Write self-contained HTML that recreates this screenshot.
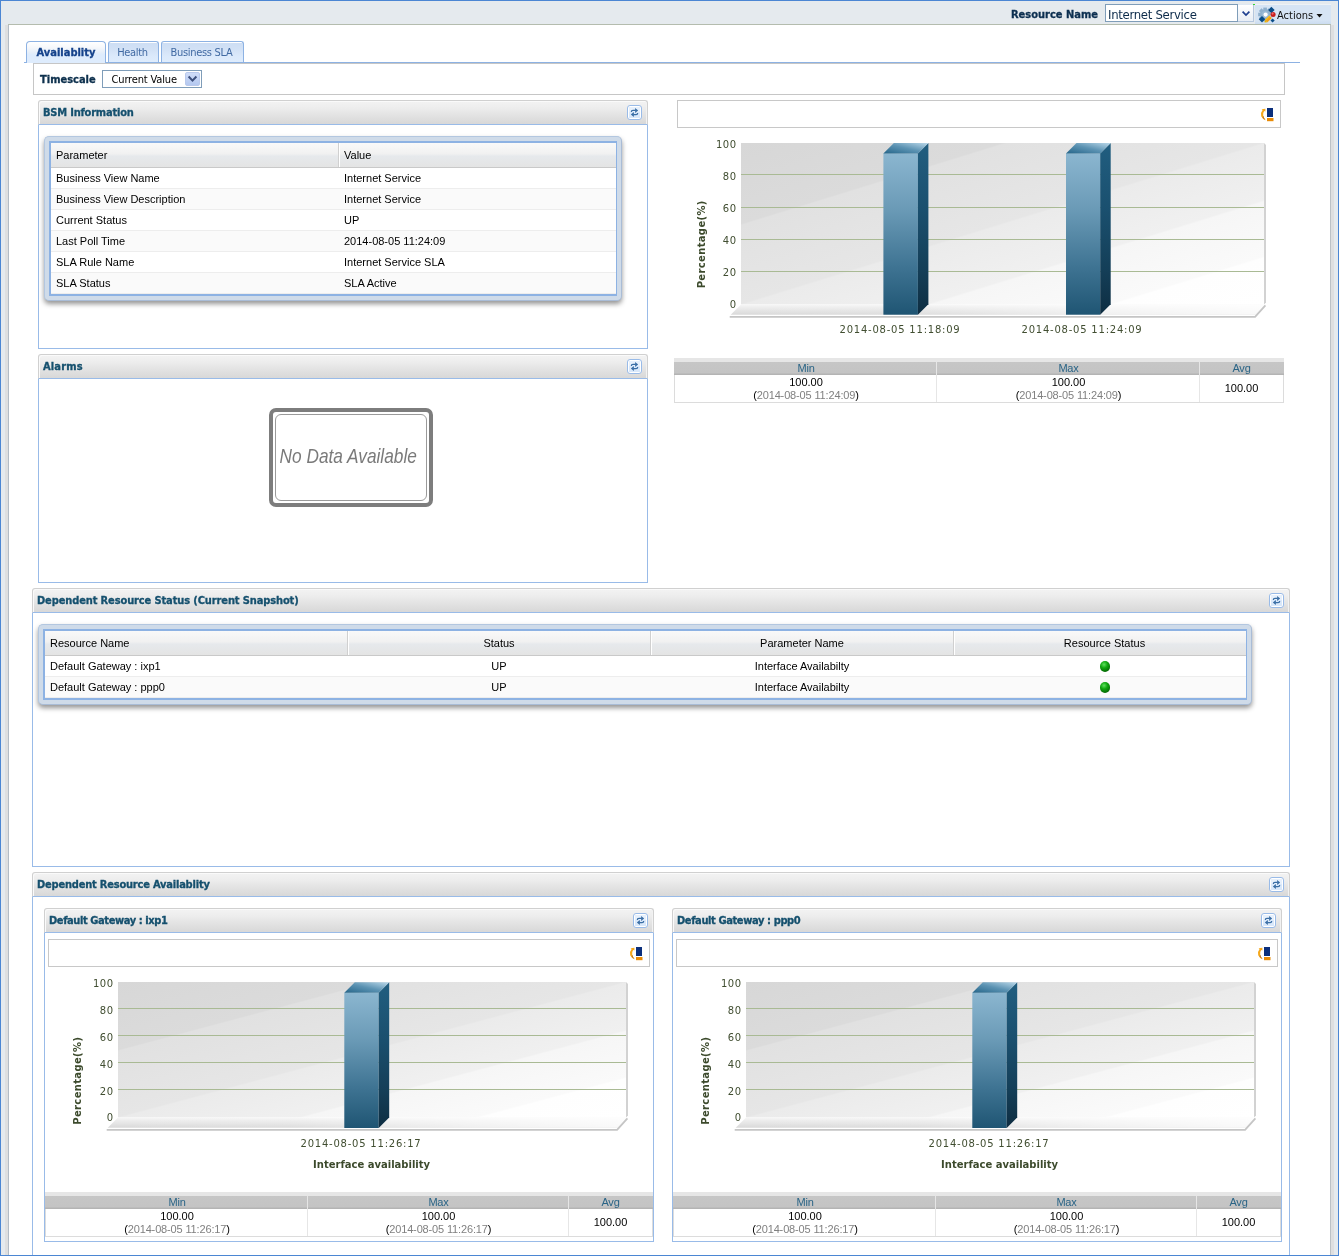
<!DOCTYPE html>
<html lang="en"><head><meta charset="utf-8"><title>Business Service - Availablity</title>
<style>
*{box-sizing:border-box}
html,body{margin:0;padding:0}
body{width:1339px;height:1256px;overflow:hidden;background:#e5eaee;font-family:"Liberation Sans",sans-serif;font-size:11px;color:#000;position:relative}
#root{position:absolute;left:0;top:0;width:1339px;height:1256px;will-change:transform}
.abs{position:absolute}
.t{position:absolute;white-space:nowrap;line-height:1}
.tah{font-family:"DejaVu Sans Condensed","DejaVu Sans","Liberation Sans",sans-serif;font-stretch:condensed}
.ver{font-family:"DejaVu Sans","Liberation Sans",sans-serif}
/* outer frame */
#frame{left:0;top:0;width:1339px;height:1256px;border:1px solid #4b86d3;z-index:10}
#content{left:9px;top:25px;width:1321px;height:1230px;background:#fff}
#cb-top{left:8px;top:24px;width:1323px;height:1px;background:#b4bcae}
#cb-left{left:8px;top:25px;width:1px;height:1230px;background:#b3bcc5}
#sh-left{left:5px;top:25px;width:3px;height:1230px;background:#dedfe0}
#sh-right{left:1330px;top:25px;width:4px;height:1230px;background:linear-gradient(90deg,#bcc1c6 0,#bcc1c6 1px,#dedfe0 1px,#dedfe0 4px)}
/* panel headers */
.ph{position:absolute;height:25px;border:1px solid #d0d0d0;border-bottom:1px solid #99bbe8;border-radius:3px 3px 0 0;background:linear-gradient(180deg,#f3f3f3 0%,#ededed 30%,#e2e2e2 65%,#d8d8d8 100%);box-shadow:inset 1px 1px 0 #fafafa,inset -1px 0 0 #f2f2f2}
.ph .ttl{position:absolute;left:4px;top:6px;-webkit-text-stroke:0.3px currentColor;font-weight:bold;font-size:11px;line-height:11px;color:#15506e;white-space:nowrap;letter-spacing:-0.2px}
.pb{position:absolute;border:1px solid #99bbe8;border-top:none;background:#fff}
.rf{position:absolute;width:15px;height:15px;border:1px solid #99bbe8;border-radius:3px;background:#fff;overflow:hidden}
.rf svg{position:absolute;left:0;top:0}
/* grids */
.gf{position:absolute;border:1px solid #a9bcd6;border-top-color:#b3c7e0;border-left-color:#b3c7e0;border-radius:5px;background:#cfdbe9;box-shadow:0 3px 5px rgba(0,0,0,.42)}
.gi{position:absolute;left:4px;top:4px;right:4px;bottom:4px;border:1px solid #8db2e3;border-width:2px 1px 2px 2px;background:#fff;overflow:hidden}
.gh{position:absolute;left:0;top:0;right:0;height:25px;background:linear-gradient(180deg,#f9f9f9 0%,#f1f1f1 45%,#e6e9ec 55%,#e4e4e4 100%);border-bottom:1px solid #c9c9c9}
.gr{position:absolute;left:0;right:0;height:21px;border-bottom:1px solid #ededed;background:#fff}
.gr.alt{background:#fafafa}
.gc{position:absolute;top:0;height:100%;font-size:11px;line-height:11px;white-space:nowrap}
.gc span{position:absolute;top:5px}
.gh .gc span{top:7px}
.sep{position:absolute;top:0;width:1px;height:24px;background:#d0d0d0;box-shadow:1px 0 0 #fff}
/* stats table */
.st{position:absolute;height:45px;border:1px solid #dcdcdc;border-top:none;background:#fff}
.st .hd{position:absolute;left:-1px;right:-1px;top:0;height:17px;background:linear-gradient(180deg,#e6e6e6 0,#e6e6e6 4px,#c6c6c6 4px,#c4c4c4 15px,#b4b4b4 16px,#b4b4b4 17px)}
.st .c{position:absolute;top:0;height:100%;text-align:center}
.st .hl{position:absolute;left:0;right:0;top:5px;font-size:11px;line-height:11px;color:#2a6486;text-align:center;letter-spacing:-0.2px}
.st .v{position:absolute;left:0;right:0;font-size:11px;line-height:11px;text-align:center;color:#000}
.st .d{position:absolute;left:0;right:0;font-size:11px;line-height:11px;text-align:center;color:#808080;letter-spacing:-0.15px}
.st .d b{font-weight:normal;color:#000}
.st .vs{position:absolute;top:4px;bottom:0;width:1px;background:#e6e6e6}
.dot{position:absolute;left:50%;top:0;margin-left:-5px;width:10.5px;height:10.5px;border-radius:50%;background:radial-gradient(circle at 40% 32%,#5fe05f 0%,#12a812 35%,#067306 70%,#034d03 100%)}
.tb{position:absolute;height:28px;border:1px solid #c8c8c8;background:#fff}
</style></head>
<body>
<div id="root">
<div class="abs" id="frame"></div>
<div class="abs" id="content"></div>
<div class="abs" id="cb-top"></div><div class="abs" id="cb-left"></div>
<div class="abs" id="sh-left"></div><div class="abs" id="sh-right"></div>
<div class="t tah" style="left:1011px;top:9px;font-weight:bold;-webkit-text-stroke:0.3px #0c2f50;font-size:11px;line-height:11px;color:#0c2f50;letter-spacing:0px" id="rn">Resource Name</div>
<div class="abs" style="left:1105px;top:4px;width:133px;height:18px;border:1px solid #7f9db9;background:#fff"></div>
<div class="t tah" style="left:1108px;top:8px;font-size:13px;line-height:13px;color:#0d2b4a;letter-spacing:-0.3px" id="isv">Internet Service</div>
<div class="abs" style="left:1238px;top:4px;width:16px;height:18px;border:1px solid #b5c7de;border-left:none;border-top-color:#dfe8f2;background:linear-gradient(180deg,#ffffff,#e9eef5)"></div>
<svg class="abs" style="left:1240px;top:9px" width="12" height="9" viewBox="0 0 12 9"><path d="M2.6 2.6 L6 6 L9.4 2.6" fill="none" stroke="#1f3f8f" stroke-width="1.7"/></svg>
<div class="abs" style="left:1255px;top:5px;width:76px;height:19px;background:linear-gradient(180deg,#d6e4f4 0%,#d6e4f4 80%,#cbdcf0 100%)"></div>
<div class="abs" style="left:1255px;top:4px;width:76px;height:1px;background:#eef2f6"></div>
<div class="abs" style="left:1253px;top:4px;width:2px;height:1px;background:#35d835"></div>
<svg class="abs" style="left:1257px;top:6px" width="20" height="18" viewBox="0 0 20 18">
<g fill="#8fb0cd"><circle cx="8.1" cy="8.5" r="4.9"/><rect x="6.3" y="1.6" width="3.6" height="13.8"/><rect x="1.2" y="6.7" width="13.8" height="3.6"/><rect x="6.3" y="1.6" width="3.6" height="13.8" transform="rotate(45 8.1 8.5)"/><rect x="6.3" y="1.6" width="3.6" height="13.8" transform="rotate(-45 8.1 8.5)"/></g>
<circle cx="8.1" cy="8.5" r="3.6" fill="#a3c0d9" opacity=".55"/>
<circle cx="8.6" cy="8.6" r="2.1" fill="#ffffff"/>
<g fill="#0a4d88"><rect x="12.1" y="1.7" width="4.6" height="4.6" transform="rotate(45 14.4 4)"/><rect x="2.7" y="11" width="4.6" height="4.6" transform="rotate(45 5 13.3)"/><rect x="14.1" y="13" width="3" height="3" transform="rotate(45 15.6 14.5)"/></g>
<path d="M7.5 16.6 L8.07 13.71 L10.41 16.17 Z" fill="#e9b500"/>
<path d="M8.07 13.71 L12.57 9.44 L14.91 11.9 L10.41 16.17 Z" fill="#f3a017"/>
<path d="M8.07 13.71 L12.57 9.44 L13.4 10.3 L8.9 14.6 Z" fill="#f8c21c"/>
<path d="M12.57 9.44 L13.43 8.6 L15.78 11.07 L14.91 11.9 Z" fill="#c9cdd1"/>
<circle cx="16.1" cy="8.4" r="2.5" fill="#c81e1e"/><circle cx="15.6" cy="7.6" r="1.1" fill="#ef6a6a"/>
</svg>
<div class="t tah" style="left:1277px;top:10px;font-size:11px;line-height:11px;color:#111;letter-spacing:0px" id="act">Actions</div>
<svg class="abs" style="left:1316px;top:14px" width="7" height="4" viewBox="0 0 7 4"><path d="M0.5 0 L6.5 0 L3.5 3.4 Z" fill="#111"/></svg>
<div class="abs" style="left:24px;top:62px;width:1276px;height:1px;background:#8db2e3"></div>
<div class="abs" style="left:26px;top:41px;width:80px;height:22px;border:1px solid #8db2e3;border-bottom:none;border-radius:4px 4px 0 0;background:linear-gradient(180deg,#ffffff 0%,#f6f8fb 25%,#e6effa 50%,#deecfd 60%,#deecfd 100%)"></div><div class="abs" style="left:24px;top:62px;width:3px;height:1px;background:#8db2e3"></div><div class="t tah" id="tab1" style="left:26px;width:80px;text-align:center;top:47px;font-weight:bold;-webkit-text-stroke:0.3px #15428b;font-size:11px;line-height:11px;color:#15428b;letter-spacing:0px">Availablity</div>
<div class="abs" style="left:108px;top:41px;width:51px;height:21px;border:1px solid #8db2e3;border-bottom:none;border-radius:3px 3px 0 0;background:linear-gradient(180deg,#ffffff 0,#ffffff 1px,#cddef4 1px,#d3e2f6 40%,#dbe9fb 70%,#deecfd 100%)"></div><div class="t tah" id="tab2" style="left:107px;width:51px;text-align:center;top:47px;font-size:11px;line-height:11px;color:#416aa3;letter-spacing:-0.3px">Health</div>
<div class="abs" style="left:161px;top:41px;width:83px;height:21px;border:1px solid #8db2e3;border-bottom:none;border-radius:3px 3px 0 0;background:linear-gradient(180deg,#ffffff 0,#ffffff 1px,#cddef4 1px,#d3e2f6 40%,#dbe9fb 70%,#deecfd 100%)"></div><div class="t tah" id="tab3" style="left:160px;width:83px;text-align:center;top:47px;font-size:11px;line-height:11px;color:#416aa3;letter-spacing:-0.3px">Business SLA</div>
<div class="abs" style="left:33px;top:63px;width:1252px;height:32px;border:1px solid #c6c6c6;background:#fff"></div>
<div class="t tah" id="tsl" style="left:40px;top:74px;font-weight:bold;-webkit-text-stroke:0.3px #0d304d;font-size:11px;line-height:11px;color:#0d304d;letter-spacing:0px">Timescale</div>
<div class="abs" style="left:102px;top:70px;width:100px;height:18px;border:1px solid #7f9db9;background:#fff"></div>
<div class="t tah" id="tsv" style="left:111.5px;top:74px;font-size:11px;line-height:11px;color:#000;letter-spacing:-0.15px">Current Value</div>
<div class="abs" style="left:185px;top:72px;width:15px;height:14px;border-radius:2px;background:linear-gradient(180deg,#cfdcf8,#b4c8f0);border:1px solid #b9c9ec"></div>
<svg class="abs" style="left:187px;top:75px" width="11" height="8" viewBox="0 0 11 8"><path d="M1.6 1.5 L5.5 5.6 L9.4 1.5" fill="none" stroke="#3c4f7c" stroke-width="2"/></svg>
<div class="ph" style="left:38px;top:100px;width:610px"><div class="ttl tah" id="p1" style="letter-spacing:-0.2px">BSM Information</div></div><div class="pb" style="left:38px;top:125px;width:610px;height:224px"></div><div class="rf" style="left:627px;top:105px"><svg width="13" height="13" viewBox="0 0 13 13"><rect x="1" y="1" width="11" height="11" fill="#e6f0fc"/><rect x="1" y="6" width="11" height="6" fill="#d9e8fa"/><g fill="none" stroke="#3a6ea5" stroke-width="1.25"><path d="M3.3 6 Q3.3 4.4 5 4.4 L7.6 4.4"/><path d="M9.7 7 Q9.7 8.6 8 8.6 L5.4 8.6"/></g><path d="M7.1 1.9 L10.2 4.4 L7.1 6.9 Z" fill="#3a6ea5"/><path d="M5.9 6.1 L2.8 8.6 L5.9 11.1 Z" fill="#3a6ea5"/></svg></div>
<div class="gf" style="left:44px;top:136px;width:578px;height:165px"><div class="gi"><div class="gh"><div class="gc" style="left:0px;width:287px"><span style="left:5px">Parameter</span></div><div class="gc" style="left:288px;width:278px"><span style="left:5px">Value</span></div><div class="sep" style="left:287px"></div></div><div class="gr" style="top:25px"><div class="gc" style="left:0px;width:287px"><span style="left:5px">Business View Name</span></div><div class="gc" style="left:288px;width:278px"><span style="left:5px">Internet Service</span></div></div><div class="gr alt" style="top:46px"><div class="gc" style="left:0px;width:287px"><span style="left:5px">Business View Description</span></div><div class="gc" style="left:288px;width:278px"><span style="left:5px">Internet Service</span></div></div><div class="gr" style="top:67px"><div class="gc" style="left:0px;width:287px"><span style="left:5px">Current Status</span></div><div class="gc" style="left:288px;width:278px"><span style="left:5px">UP</span></div></div><div class="gr alt" style="top:88px"><div class="gc" style="left:0px;width:287px"><span style="left:5px">Last Poll Time</span></div><div class="gc" style="left:288px;width:278px"><span style="left:5px">2014-08-05 11:24:09</span></div></div><div class="gr" style="top:109px"><div class="gc" style="left:0px;width:287px"><span style="left:5px">SLA Rule Name</span></div><div class="gc" style="left:288px;width:278px"><span style="left:5px">Internet Service SLA</span></div></div><div class="gr alt" style="top:130px"><div class="gc" style="left:0px;width:287px"><span style="left:5px">SLA Status</span></div><div class="gc" style="left:288px;width:278px"><span style="left:5px">SLA Active</span></div></div></div></div>
<div class="ph" style="left:38px;top:354px;width:610px"><div class="ttl tah" id="p2" style="letter-spacing:0.15px">Alarms</div></div><div class="pb" style="left:38px;top:379px;width:610px;height:204px"></div><div class="rf" style="left:627px;top:359px"><svg width="13" height="13" viewBox="0 0 13 13"><rect x="1" y="1" width="11" height="11" fill="#e6f0fc"/><rect x="1" y="6" width="11" height="6" fill="#d9e8fa"/><g fill="none" stroke="#3a6ea5" stroke-width="1.25"><path d="M3.3 6 Q3.3 4.4 5 4.4 L7.6 4.4"/><path d="M9.7 7 Q9.7 8.6 8 8.6 L5.4 8.6"/></g><path d="M7.1 1.9 L10.2 4.4 L7.1 6.9 Z" fill="#3a6ea5"/><path d="M5.9 6.1 L2.8 8.6 L5.9 11.1 Z" fill="#3a6ea5"/></svg></div>
<div class="abs" style="left:269px;top:408px;width:164px;height:99px;border:4px solid #7d7d7d;border-radius:7px;background:#fff"></div>
<div class="abs" style="left:275px;top:414px;width:152px;height:87px;border:1px solid #9a9a9a;border-radius:6px;background:#fff"></div>
<div class="t" id="nda" style="left:265.4px;width:164px;text-align:center;top:445px;font-style:italic;font-size:21px;line-height:22px;color:#7a7a7a;transform:scaleX(.822);transform-origin:50% 50%">No Data Available</div>
<div class="ph" style="left:32px;top:588px;width:1258px"><div class="ttl tah" id="p3" style="letter-spacing:-0.12px">Dependent Resource Status (Current Snapshot)</div></div><div class="pb" style="left:32px;top:613px;width:1258px;height:254px"></div><div class="rf" style="left:1269px;top:593px"><svg width="13" height="13" viewBox="0 0 13 13"><rect x="1" y="1" width="11" height="11" fill="#e6f0fc"/><rect x="1" y="6" width="11" height="6" fill="#d9e8fa"/><g fill="none" stroke="#3a6ea5" stroke-width="1.25"><path d="M3.3 6 Q3.3 4.4 5 4.4 L7.6 4.4"/><path d="M9.7 7 Q9.7 8.6 8 8.6 L5.4 8.6"/></g><path d="M7.1 1.9 L10.2 4.4 L7.1 6.9 Z" fill="#3a6ea5"/><path d="M5.9 6.1 L2.8 8.6 L5.9 11.1 Z" fill="#3a6ea5"/></svg></div>
<div class="gf" style="left:38px;top:624px;width:1214px;height:81px"><div class="gi"><div class="gh"><div class="gc" style="left:0px;width:302px"><span style="left:5px">Resource Name</span></div><div class="gc" style="left:303px;width:302px"><span style="left:0;width:302px;text-align:center">Status</span></div><div class="sep" style="left:302px"></div><div class="gc" style="left:606px;width:302px"><span style="left:0;width:302px;text-align:center">Parameter Name</span></div><div class="sep" style="left:605px"></div><div class="gc" style="left:909px;width:301px"><span style="left:0;width:301px;text-align:center">Resource Status</span></div><div class="sep" style="left:908px"></div></div><div class="gr" style="top:25px"><div class="gc" style="left:0px;width:302px"><span style="left:5px">Default Gateway : ixp1</span></div><div class="gc" style="left:303px;width:302px"><span style="left:0;width:302px;text-align:center">UP</span></div><div class="gc" style="left:606px;width:302px"><span style="left:0;width:302px;text-align:center">Interface Availabilty</span></div><div class="gc" style="left:909px;width:301px"><span style="left:0;width:301px;text-align:center"><i class="dot"></i></span></div></div><div class="gr alt" style="top:46px"><div class="gc" style="left:0px;width:302px"><span style="left:5px">Default Gateway : ppp0</span></div><div class="gc" style="left:303px;width:302px"><span style="left:0;width:302px;text-align:center">UP</span></div><div class="gc" style="left:606px;width:302px"><span style="left:0;width:302px;text-align:center">Interface Availabilty</span></div><div class="gc" style="left:909px;width:301px"><span style="left:0;width:301px;text-align:center"><i class="dot"></i></span></div></div></div></div>
<div class="ph" style="left:32px;top:872px;width:1258px"><div class="ttl tah" id="p4" style="letter-spacing:-0.2px">Dependent Resource Availablity</div></div><div class="pb" style="left:32px;top:897px;width:1258px;height:400px"></div><div class="rf" style="left:1269px;top:877px"><svg width="13" height="13" viewBox="0 0 13 13"><rect x="1" y="1" width="11" height="11" fill="#e6f0fc"/><rect x="1" y="6" width="11" height="6" fill="#d9e8fa"/><g fill="none" stroke="#3a6ea5" stroke-width="1.25"><path d="M3.3 6 Q3.3 4.4 5 4.4 L7.6 4.4"/><path d="M9.7 7 Q9.7 8.6 8 8.6 L5.4 8.6"/></g><path d="M7.1 1.9 L10.2 4.4 L7.1 6.9 Z" fill="#3a6ea5"/><path d="M5.9 6.1 L2.8 8.6 L5.9 11.1 Z" fill="#3a6ea5"/></svg></div>
<div class="ph" style="left:44px;top:908px;width:610px"><div class="ttl tah" id="p5" style="letter-spacing:-0.4px">Default Gateway : ixp1</div></div><div class="pb" style="left:44px;top:933px;width:610px;height:309px"></div><div class="rf" style="left:633px;top:913px"><svg width="13" height="13" viewBox="0 0 13 13"><rect x="1" y="1" width="11" height="11" fill="#e6f0fc"/><rect x="1" y="6" width="11" height="6" fill="#d9e8fa"/><g fill="none" stroke="#3a6ea5" stroke-width="1.25"><path d="M3.3 6 Q3.3 4.4 5 4.4 L7.6 4.4"/><path d="M9.7 7 Q9.7 8.6 8 8.6 L5.4 8.6"/></g><path d="M7.1 1.9 L10.2 4.4 L7.1 6.9 Z" fill="#3a6ea5"/><path d="M5.9 6.1 L2.8 8.6 L5.9 11.1 Z" fill="#3a6ea5"/></svg></div>
<div class="ph" style="left:672px;top:908px;width:610px"><div class="ttl tah" id="p6" style="letter-spacing:-0.38px">Default Gateway : ppp0</div></div><div class="pb" style="left:672px;top:933px;width:610px;height:309px"></div><div class="rf" style="left:1261px;top:913px"><svg width="13" height="13" viewBox="0 0 13 13"><rect x="1" y="1" width="11" height="11" fill="#e6f0fc"/><rect x="1" y="6" width="11" height="6" fill="#d9e8fa"/><g fill="none" stroke="#3a6ea5" stroke-width="1.25"><path d="M3.3 6 Q3.3 4.4 5 4.4 L7.6 4.4"/><path d="M9.7 7 Q9.7 8.6 8 8.6 L5.4 8.6"/></g><path d="M7.1 1.9 L10.2 4.4 L7.1 6.9 Z" fill="#3a6ea5"/><path d="M5.9 6.1 L2.8 8.6 L5.9 11.1 Z" fill="#3a6ea5"/></svg></div>
<div class="tb" style="left:677px;top:100px;width:604px"></div><svg class="abs" style="left:1260px;top:108px" width="16" height="14" viewBox="0 0 16 14">
<rect x="7" y="0" width="6" height="9" fill="#0b2f7c"/><rect x="7" y="10" width="6.5" height="3.2" fill="#e98b06"/>
<path d="M5.4 0.8 L5.4 3.6 L4.2 3 Q2.6 5.2 3.2 7.8 Q3.8 10 5.6 12.2 Q2.4 11 1.2 8.2 Q0.2 4.8 2.6 2 L1.6 1.2 Z" fill="#f5a81c"/>
<path d="M3.2 7.8 Q3.8 10 5.6 12.2 Q3.8 11.4 2.6 9.6 Z" fill="#b8732a"/>
</svg>
<svg class="abs" style="left:0;top:0;pointer-events:none" width="1339" height="1256" viewBox="0 0 1339 1256"><defs>
<linearGradient id="bw1" gradientUnits="userSpaceOnUse" x1="741" y1="143" x2="832.1" y2="437.9">
<stop offset="0" stop-color="#d7d7d7"/><stop offset="0.25" stop-color="#dbdbdb"/><stop offset="0.255" stop-color="#e1e1e1"/>
<stop offset="0.497" stop-color="#e6e6e6"/><stop offset="0.503" stop-color="#ebebeb"/>
<stop offset="0.676" stop-color="#f0f0f0"/><stop offset="0.682" stop-color="#f6f6f6"/>
<stop offset="0.85" stop-color="#fafafa"/><stop offset="0.856" stop-color="#fefefe"/><stop offset="1" stop-color="#ffffff"/>
</linearGradient>
<linearGradient id="fl1" x1="0" y1="0" x2="0" y2="1"><stop offset="0" stop-color="#f7f7f7"/><stop offset="0.25" stop-color="#eeeeee"/><stop offset="1" stop-color="#d9d9d9"/></linearGradient>
<linearGradient id="fw1" x1="0" y1="0" x2="1" y2="0"><stop offset="0" stop-color="#fff" stop-opacity="0"/><stop offset="0.35" stop-color="#fff" stop-opacity="0.1"/><stop offset="0.7" stop-color="#fff" stop-opacity="0.6"/><stop offset="1" stop-color="#fff" stop-opacity="0.85"/></linearGradient>
<linearGradient id="bf1" x1="0" y1="0" x2="0" y2="1"><stop offset="0" stop-color="#8bb6d0"/><stop offset="0.35" stop-color="#6a9ab6"/><stop offset="0.7" stop-color="#3f7493"/><stop offset="1" stop-color="#1f5573"/></linearGradient>
<linearGradient id="bs1" x1="0" y1="0" x2="0" y2="1"><stop offset="0" stop-color="#215e80"/><stop offset="0.4" stop-color="#1a4f6e"/><stop offset="0.75" stop-color="#143e57"/><stop offset="1" stop-color="#0e2d41"/></linearGradient>
<linearGradient id="bt1" x1="0" y1="1" x2="1" y2="0"><stop offset="0" stop-color="#256589"/><stop offset="0.5" stop-color="#5c93b3"/><stop offset="1" stop-color="#bcd9ea"/></linearGradient>
</defs><rect x="741" y="143" width="523" height="161.5" fill="url(#bw1)"/><path d="M1264 143 L1266 145 L1266 302.5 L1264 304.5 Z" fill="#d2d2d2"/><rect x="741" y="174" width="523" height="1" fill="#a9ba94"/><rect x="741" y="207" width="523" height="1" fill="#a9ba94"/><rect x="741" y="239" width="523" height="1" fill="#a9ba94"/><rect x="741" y="271" width="523" height="1" fill="#a9ba94"/><path d="M741 304.5 L1266 304.5 L1255.7 314.8 L730.7 314.8 Z" fill="url(#fl1)"/><path d="M741 304.5 L1266 304.5 L1255.7 314.8 L730.7 314.8 Z" fill="url(#fw1)"/><path d="M729.7 316.90000000000003 L1255.1000000000001 316.90000000000003 L1265.4 305.3" fill="none" stroke="#c5c5c5" stroke-width="1.8" stroke-linejoin="miter"/><rect x="883.4" y="153.4" width="34.5" height="161.29999999999998" fill="url(#bf1)"/><path d="M917.9 153.4 L928.4 142.9 L928.4 304.2 L917.9 314.7 Z" fill="url(#bs1)"/><path d="M883.4 153.4 L893.9 142.9 L928.4 142.9 L917.9 153.4 Z" fill="url(#bt1)"/><rect x="1066" y="153.4" width="34.200000000000045" height="161.29999999999998" fill="url(#bf1)"/><path d="M1100.2 153.4 L1110.7 142.9 L1110.7 304.2 L1100.2 314.7 Z" fill="url(#bs1)"/><path d="M1066 153.4 L1076.5 142.9 L1110.7 142.9 L1100.2 153.4 Z" fill="url(#bt1)"/><text x="736.5" y="147.9" text-anchor="end" font-family="DejaVu Sans, Liberation Sans, sans-serif" font-size="10" letter-spacing="0.5" fill="#414e31">100</text><text x="736.5" y="179.9" text-anchor="end" font-family="DejaVu Sans, Liberation Sans, sans-serif" font-size="10" letter-spacing="0.5" fill="#414e31">80</text><text x="736.5" y="212.0" text-anchor="end" font-family="DejaVu Sans, Liberation Sans, sans-serif" font-size="10" letter-spacing="0.5" fill="#414e31">60</text><text x="736.5" y="244.4" text-anchor="end" font-family="DejaVu Sans, Liberation Sans, sans-serif" font-size="10" letter-spacing="0.5" fill="#414e31">40</text><text x="736.5" y="276.4" text-anchor="end" font-family="DejaVu Sans, Liberation Sans, sans-serif" font-size="10" letter-spacing="0.5" fill="#414e31">20</text><text x="736.5" y="308.4" text-anchor="end" font-family="DejaVu Sans, Liberation Sans, sans-serif" font-size="10" letter-spacing="0.5" fill="#414e31">0</text><text x="900" y="333" text-anchor="middle" font-family="DejaVu Sans, Liberation Sans, sans-serif" font-size="10" letter-spacing="0.78" fill="#414e31">2014-08-05 11:18:09</text><text x="1082" y="333" text-anchor="middle" font-family="DejaVu Sans, Liberation Sans, sans-serif" font-size="10" letter-spacing="0.78" fill="#414e31">2014-08-05 11:24:09</text><text transform="translate(704.7 244.3) rotate(-90)" text-anchor="middle" font-family="DejaVu Sans, Liberation Sans, sans-serif" font-weight="bold" font-size="10" letter-spacing="0.35" fill="#3c4a2c">Percentage(%)</text></svg>
<div class="st" style="left:674px;top:358px;width:610px"><div class="hd"></div><div class="c" style="left:0px;width:262px"><div class="hl">Min</div><div class="v" style="top:19px">100.00</div><div class="d" style="top:32px"><b>(</b>2014-08-05 11:24:09<b>)</b></div></div><div class="c" style="left:262px;width:263px"><div class="hl">Max</div><div class="v" style="top:19px">100.00</div><div class="d" style="top:32px"><b>(</b>2014-08-05 11:24:09<b>)</b></div></div><div class="c" style="left:525px;width:83px"><div class="hl">Avg</div><div class="v" style="top:25px">100.00</div></div><div class="vs" style="left:261px"></div><div class="vs" style="left:524px"></div></div>
<div class="tb" style="left:48px;top:939px;width:602px"></div><svg class="abs" style="left:629px;top:947px" width="16" height="14" viewBox="0 0 16 14">
<rect x="7" y="0" width="6" height="9" fill="#0b2f7c"/><rect x="7" y="10" width="6.5" height="3.2" fill="#e98b06"/>
<path d="M5.4 0.8 L5.4 3.6 L4.2 3 Q2.6 5.2 3.2 7.8 Q3.8 10 5.6 12.2 Q2.4 11 1.2 8.2 Q0.2 4.8 2.6 2 L1.6 1.2 Z" fill="#f5a81c"/>
<path d="M3.2 7.8 Q3.8 10 5.6 12.2 Q3.8 11.4 2.6 9.6 Z" fill="#b8732a"/>
</svg>
<svg class="abs" style="left:0;top:0;pointer-events:none" width="1339" height="1256" viewBox="0 0 1339 1256"><defs>
<linearGradient id="bw2" gradientUnits="userSpaceOnUse" x1="118" y1="982" x2="185.5" y2="1235.0">
<stop offset="0" stop-color="#d7d7d7"/><stop offset="0.25" stop-color="#dbdbdb"/><stop offset="0.255" stop-color="#e1e1e1"/>
<stop offset="0.497" stop-color="#e6e6e6"/><stop offset="0.503" stop-color="#ebebeb"/>
<stop offset="0.676" stop-color="#f0f0f0"/><stop offset="0.682" stop-color="#f6f6f6"/>
<stop offset="0.85" stop-color="#fafafa"/><stop offset="0.856" stop-color="#fefefe"/><stop offset="1" stop-color="#ffffff"/>
</linearGradient>
<linearGradient id="fl2" x1="0" y1="0" x2="0" y2="1"><stop offset="0" stop-color="#f7f7f7"/><stop offset="0.25" stop-color="#eeeeee"/><stop offset="1" stop-color="#d9d9d9"/></linearGradient>
<linearGradient id="fw2" x1="0" y1="0" x2="1" y2="0"><stop offset="0" stop-color="#fff" stop-opacity="0"/><stop offset="0.35" stop-color="#fff" stop-opacity="0.1"/><stop offset="0.7" stop-color="#fff" stop-opacity="0.6"/><stop offset="1" stop-color="#fff" stop-opacity="0.85"/></linearGradient>
<linearGradient id="bf2" x1="0" y1="0" x2="0" y2="1"><stop offset="0" stop-color="#8bb6d0"/><stop offset="0.35" stop-color="#6a9ab6"/><stop offset="0.7" stop-color="#3f7493"/><stop offset="1" stop-color="#1f5573"/></linearGradient>
<linearGradient id="bs2" x1="0" y1="0" x2="0" y2="1"><stop offset="0" stop-color="#215e80"/><stop offset="0.4" stop-color="#1a4f6e"/><stop offset="0.75" stop-color="#143e57"/><stop offset="1" stop-color="#0e2d41"/></linearGradient>
<linearGradient id="bt2" x1="0" y1="1" x2="1" y2="0"><stop offset="0" stop-color="#256589"/><stop offset="0.5" stop-color="#5c93b3"/><stop offset="1" stop-color="#bcd9ea"/></linearGradient>
</defs><rect x="118" y="982" width="508" height="135.5" fill="url(#bw2)"/><path d="M626 982 L628 984 L628 1115.5 L626 1117.5 Z" fill="#d2d2d2"/><rect x="118" y="1008" width="508" height="1" fill="#a9ba94"/><rect x="118" y="1035" width="508" height="1" fill="#a9ba94"/><rect x="118" y="1062" width="508" height="1" fill="#a9ba94"/><rect x="118" y="1089" width="508" height="1" fill="#a9ba94"/><path d="M118 1117.5 L628 1117.5 L617.7 1127.8 L107.7 1127.8 Z" fill="url(#fl2)"/><path d="M118 1117.5 L628 1117.5 L617.7 1127.8 L107.7 1127.8 Z" fill="url(#fw2)"/><path d="M106.7 1129.8999999999999 L617.1 1129.8999999999999 L627.4 1118.3" fill="none" stroke="#c5c5c5" stroke-width="1.8" stroke-linejoin="miter"/><rect x="344.3" y="992.7" width="34.39999999999998" height="135.29999999999995" fill="url(#bf2)"/><path d="M378.7 992.7 L389.2 982.2 L389.2 1117.5 L378.7 1128 Z" fill="url(#bs2)"/><path d="M344.3 992.7 L354.8 982.2 L389.2 982.2 L378.7 992.7 Z" fill="url(#bt2)"/><text x="113.5" y="987.1" text-anchor="end" font-family="DejaVu Sans, Liberation Sans, sans-serif" font-size="10" letter-spacing="0.5" fill="#414e31">100</text><text x="113.5" y="1013.9" text-anchor="end" font-family="DejaVu Sans, Liberation Sans, sans-serif" font-size="10" letter-spacing="0.5" fill="#414e31">80</text><text x="113.5" y="1040.9" text-anchor="end" font-family="DejaVu Sans, Liberation Sans, sans-serif" font-size="10" letter-spacing="0.5" fill="#414e31">60</text><text x="113.5" y="1067.9" text-anchor="end" font-family="DejaVu Sans, Liberation Sans, sans-serif" font-size="10" letter-spacing="0.5" fill="#414e31">40</text><text x="113.5" y="1094.9" text-anchor="end" font-family="DejaVu Sans, Liberation Sans, sans-serif" font-size="10" letter-spacing="0.5" fill="#414e31">20</text><text x="113.5" y="1121.4" text-anchor="end" font-family="DejaVu Sans, Liberation Sans, sans-serif" font-size="10" letter-spacing="0.5" fill="#414e31">0</text><text x="361" y="1146.8" text-anchor="middle" font-family="DejaVu Sans, Liberation Sans, sans-serif" font-size="10" letter-spacing="0.78" fill="#414e31">2014-08-05 11:26:17</text><text x="371.6" y="1167.7" text-anchor="middle" font-family="DejaVu Sans, Liberation Sans, sans-serif" font-weight="bold" font-size="10" fill="#3c4a2c">Interface availability</text><text transform="translate(81.2 1080.7) rotate(-90)" text-anchor="middle" font-family="DejaVu Sans, Liberation Sans, sans-serif" font-weight="bold" font-size="10" letter-spacing="0.35" fill="#3c4a2c">Percentage(%)</text></svg>
<div class="st" style="left:45px;top:1192px;width:608px"><div class="hd"></div><div class="c" style="left:0px;width:262px"><div class="hl">Min</div><div class="v" style="top:19px">100.00</div><div class="d" style="top:32px"><b>(</b>2014-08-05 11:26:17<b>)</b></div></div><div class="c" style="left:262px;width:261px"><div class="hl">Max</div><div class="v" style="top:19px">100.00</div><div class="d" style="top:32px"><b>(</b>2014-08-05 11:26:17<b>)</b></div></div><div class="c" style="left:523px;width:83px"><div class="hl">Avg</div><div class="v" style="top:25px">100.00</div></div><div class="vs" style="left:261px"></div><div class="vs" style="left:522px"></div></div>
<div class="tb" style="left:676px;top:939px;width:602px"></div><svg class="abs" style="left:1257px;top:947px" width="16" height="14" viewBox="0 0 16 14">
<rect x="7" y="0" width="6" height="9" fill="#0b2f7c"/><rect x="7" y="10" width="6.5" height="3.2" fill="#e98b06"/>
<path d="M5.4 0.8 L5.4 3.6 L4.2 3 Q2.6 5.2 3.2 7.8 Q3.8 10 5.6 12.2 Q2.4 11 1.2 8.2 Q0.2 4.8 2.6 2 L1.6 1.2 Z" fill="#f5a81c"/>
<path d="M3.2 7.8 Q3.8 10 5.6 12.2 Q3.8 11.4 2.6 9.6 Z" fill="#b8732a"/>
</svg>
<svg class="abs" style="left:0;top:0;pointer-events:none" width="1339" height="1256" viewBox="0 0 1339 1256"><defs>
<linearGradient id="bw3" gradientUnits="userSpaceOnUse" x1="746" y1="982" x2="813.5" y2="1235.0">
<stop offset="0" stop-color="#d7d7d7"/><stop offset="0.25" stop-color="#dbdbdb"/><stop offset="0.255" stop-color="#e1e1e1"/>
<stop offset="0.497" stop-color="#e6e6e6"/><stop offset="0.503" stop-color="#ebebeb"/>
<stop offset="0.676" stop-color="#f0f0f0"/><stop offset="0.682" stop-color="#f6f6f6"/>
<stop offset="0.85" stop-color="#fafafa"/><stop offset="0.856" stop-color="#fefefe"/><stop offset="1" stop-color="#ffffff"/>
</linearGradient>
<linearGradient id="fl3" x1="0" y1="0" x2="0" y2="1"><stop offset="0" stop-color="#f7f7f7"/><stop offset="0.25" stop-color="#eeeeee"/><stop offset="1" stop-color="#d9d9d9"/></linearGradient>
<linearGradient id="fw3" x1="0" y1="0" x2="1" y2="0"><stop offset="0" stop-color="#fff" stop-opacity="0"/><stop offset="0.35" stop-color="#fff" stop-opacity="0.1"/><stop offset="0.7" stop-color="#fff" stop-opacity="0.6"/><stop offset="1" stop-color="#fff" stop-opacity="0.85"/></linearGradient>
<linearGradient id="bf3" x1="0" y1="0" x2="0" y2="1"><stop offset="0" stop-color="#8bb6d0"/><stop offset="0.35" stop-color="#6a9ab6"/><stop offset="0.7" stop-color="#3f7493"/><stop offset="1" stop-color="#1f5573"/></linearGradient>
<linearGradient id="bs3" x1="0" y1="0" x2="0" y2="1"><stop offset="0" stop-color="#215e80"/><stop offset="0.4" stop-color="#1a4f6e"/><stop offset="0.75" stop-color="#143e57"/><stop offset="1" stop-color="#0e2d41"/></linearGradient>
<linearGradient id="bt3" x1="0" y1="1" x2="1" y2="0"><stop offset="0" stop-color="#256589"/><stop offset="0.5" stop-color="#5c93b3"/><stop offset="1" stop-color="#bcd9ea"/></linearGradient>
</defs><rect x="746" y="982" width="508" height="135.5" fill="url(#bw3)"/><path d="M1254 982 L1256 984 L1256 1115.5 L1254 1117.5 Z" fill="#d2d2d2"/><rect x="746" y="1008" width="508" height="1" fill="#a9ba94"/><rect x="746" y="1035" width="508" height="1" fill="#a9ba94"/><rect x="746" y="1062" width="508" height="1" fill="#a9ba94"/><rect x="746" y="1089" width="508" height="1" fill="#a9ba94"/><path d="M746 1117.5 L1256 1117.5 L1245.7 1127.8 L735.7 1127.8 Z" fill="url(#fl3)"/><path d="M746 1117.5 L1256 1117.5 L1245.7 1127.8 L735.7 1127.8 Z" fill="url(#fw3)"/><path d="M734.7 1129.8999999999999 L1245.1000000000001 1129.8999999999999 L1255.4 1118.3" fill="none" stroke="#c5c5c5" stroke-width="1.8" stroke-linejoin="miter"/><rect x="972.3" y="992.7" width="34.40000000000009" height="135.29999999999995" fill="url(#bf3)"/><path d="M1006.7 992.7 L1017.2 982.2 L1017.2 1117.5 L1006.7 1128 Z" fill="url(#bs3)"/><path d="M972.3 992.7 L982.8 982.2 L1017.2 982.2 L1006.7 992.7 Z" fill="url(#bt3)"/><text x="741.5" y="987.1" text-anchor="end" font-family="DejaVu Sans, Liberation Sans, sans-serif" font-size="10" letter-spacing="0.5" fill="#414e31">100</text><text x="741.5" y="1013.9" text-anchor="end" font-family="DejaVu Sans, Liberation Sans, sans-serif" font-size="10" letter-spacing="0.5" fill="#414e31">80</text><text x="741.5" y="1040.9" text-anchor="end" font-family="DejaVu Sans, Liberation Sans, sans-serif" font-size="10" letter-spacing="0.5" fill="#414e31">60</text><text x="741.5" y="1067.9" text-anchor="end" font-family="DejaVu Sans, Liberation Sans, sans-serif" font-size="10" letter-spacing="0.5" fill="#414e31">40</text><text x="741.5" y="1094.9" text-anchor="end" font-family="DejaVu Sans, Liberation Sans, sans-serif" font-size="10" letter-spacing="0.5" fill="#414e31">20</text><text x="741.5" y="1121.4" text-anchor="end" font-family="DejaVu Sans, Liberation Sans, sans-serif" font-size="10" letter-spacing="0.5" fill="#414e31">0</text><text x="989" y="1146.8" text-anchor="middle" font-family="DejaVu Sans, Liberation Sans, sans-serif" font-size="10" letter-spacing="0.78" fill="#414e31">2014-08-05 11:26:17</text><text x="999.6" y="1167.7" text-anchor="middle" font-family="DejaVu Sans, Liberation Sans, sans-serif" font-weight="bold" font-size="10" fill="#3c4a2c">Interface availability</text><text transform="translate(709.2 1080.7) rotate(-90)" text-anchor="middle" font-family="DejaVu Sans, Liberation Sans, sans-serif" font-weight="bold" font-size="10" letter-spacing="0.35" fill="#3c4a2c">Percentage(%)</text></svg>
<div class="st" style="left:673px;top:1192px;width:608px"><div class="hd"></div><div class="c" style="left:0px;width:262px"><div class="hl">Min</div><div class="v" style="top:19px">100.00</div><div class="d" style="top:32px"><b>(</b>2014-08-05 11:26:17<b>)</b></div></div><div class="c" style="left:262px;width:261px"><div class="hl">Max</div><div class="v" style="top:19px">100.00</div><div class="d" style="top:32px"><b>(</b>2014-08-05 11:26:17<b>)</b></div></div><div class="c" style="left:523px;width:83px"><div class="hl">Avg</div><div class="v" style="top:25px">100.00</div></div><div class="vs" style="left:261px"></div><div class="vs" style="left:522px"></div></div>

</div>
</body></html>
